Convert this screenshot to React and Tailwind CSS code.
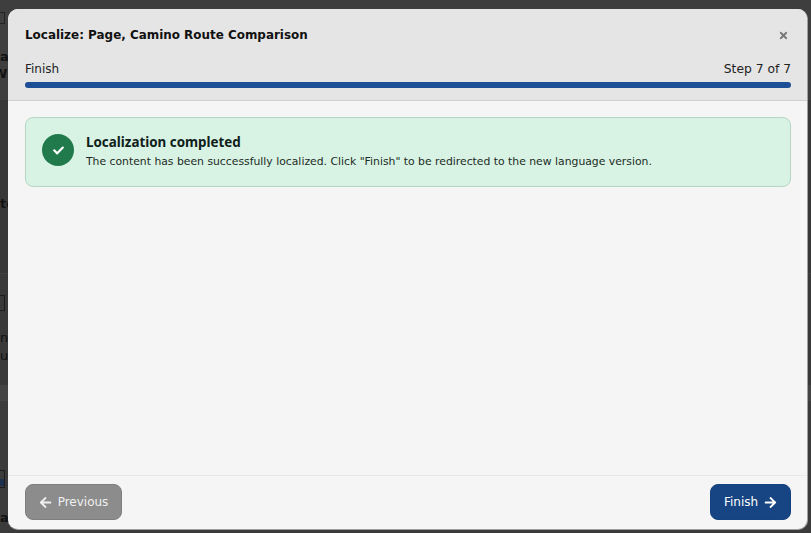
import { FaArrowLeft, FaArrowRight, FaCheck, FaTimes } from 'react-icons/fa';

const dejavu = 'font-["DejaVu_Sans",sans-serif]';

function PageBehind() {
  return (
    <div className="flex h-full flex-col text-[13px] text-[#121212]">
      <div className="h-[100px] bg-[#3e3e3e] pt-[12px]">
        <div className="h-[12px] w-[5px] border-y border-r border-[#222]" />
        <div className="mt-[24px] font-bold leading-[17px]">
          <div>ar</div>
          <div className="-ml-[7px]">Wh</div>
        </div>
      </div>
      <div className="h-[173px] border-t border-[#353535] bg-[#373737] pt-[93px] font-bold">te</div>
      <div className="h-[112px] border-t border-[#414141] bg-[#393939] pt-[21px]">
        <div className="h-[16px] w-[5px] border-y border-r border-[#1c1c1c]" />
        <div className="mt-[18px] leading-[18px]">
          <div>nc</div>
          <div>us</div>
        </div>
      </div>
      <div className="h-[16px] bg-[#444444]" />
      <div className="flex-1 bg-[#3b3b3b] pt-[69px]">
        <div className="h-[18px] w-[5px] border-y border-r border-[#1c1c1c] pt-[8px]">
          <div className="h-[7px] bg-[#1d3050]" />
        </div>
        <div className="mt-[20px] font-bold">ar</div>
      </div>
    </div>
  );
}

export default function App() {
  return (
    <div className={`relative h-[533px] w-[811px] overflow-hidden bg-[#3b3b3b] ${dejavu}`}>
      <PageBehind />

      {/* modal */}
      <div className="absolute left-[8px] top-[9px] flex h-[521px] w-[800px] flex-col overflow-hidden rounded-[10px] border-r border-b border-[#a0a0a0] bg-[#f5f5f5]">
        <div className="h-[92px] shrink-0 border-b border-[#d0d0d0] bg-[#e5e5e5] pl-[17px] pr-[16px]">
          <div className="flex h-[51px] items-center justify-between pt-[2px]">
            <h1 className="text-[11.95px] font-bold text-[#111]">Localize: Page, Camino Route Comparison</h1>
            <FaTimes className="mr-[2px] h-[11px] w-[11px] text-[#777]" />
          </div>
          <div className="flex h-[18px] items-center justify-between text-[12px] text-[#222]">
            <span>Finish</span>
            <span className="text-[12.3px]">Step 7 of 7</span>
          </div>
          <div className="mt-[4px] h-[6px] rounded-full bg-[#1c4f96]" />
        </div>

        <div className="flex-1 pl-[17px] pr-[16px] pt-[16px]">
          <div className="flex h-[70px] items-start gap-[12px] rounded-[8px] border border-[#b5d5c3] bg-[#d8f3e3] px-[16px] pt-[16px]">
            <div className="flex h-[32px] w-[32px] shrink-0 items-center justify-center rounded-full bg-[#217a4b]">
              <FaCheck className="h-[11px] w-[11px] text-white" />
            </div>
            <div>
              <div className='-mt-[1px] font-["Noto_Sans",sans-serif] text-[13.4px] font-bold leading-[19px] text-[#10201a]'>
                Localization completed
              </div>
              <p className="mt-[2px] text-[10.82px] leading-[16px] text-[#1c2b25]">
                The content has been successfully localized. Click "Finish" to be redirected to the new language version.
              </p>
            </div>
          </div>
        </div>

        <div className="flex h-[54px] shrink-0 items-start justify-between border-t border-[#e8e8e8] pl-[17px] pr-[16px] pt-[8px]">
          <button className="flex h-[36px] w-[97px] items-center justify-center gap-[6px] rounded-[8px] border border-[#7f7f7f] bg-[#8c8c8c] text-[12px] text-[#f0f0f0]">
            <FaArrowLeft className="h-[13px] w-[13px]" />
            Previous
          </button>
          <button className="flex h-[36px] w-[81px] items-center justify-center gap-[6px] rounded-[8px] border border-[#154280] bg-[#174583] text-[12px] text-white">
            Finish
            <FaArrowRight className="h-[13px] w-[13px]" />
          </button>
        </div>
      </div>
    </div>
  );
}
